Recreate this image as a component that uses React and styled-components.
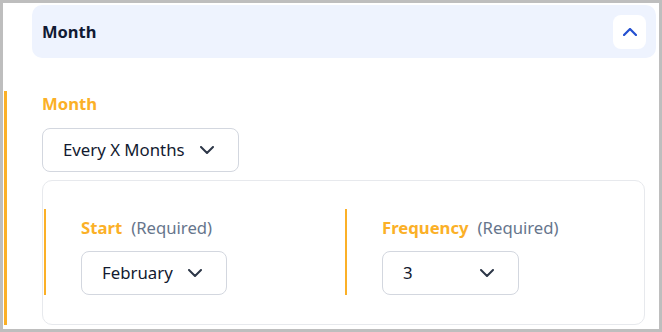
import React from "react";
import styled, { createGlobalStyle } from "styled-components";

const GlobalStyle = createGlobalStyle`
  html, body { margin: 0; padding: 0; background: #fff; }
  body { font-family: "Noto Sans", "Open Sans", sans-serif; }
  * { box-sizing: border-box; }
`;

const ORANGE = "#fbb027";

const Frame = styled.div`
  width: 662px;
  height: 332px;
  border: 3px solid #bebebe;
  background: #fff;
  padding: 2px 3px 0 1px;
  overflow: hidden;
`;

const Header = styled.div`
  margin-left: 28px;
  height: 53px;
  background: #eef3fe;
  border-radius: 10px;
  display: flex;
  align-items: center;
  justify-content: space-between;
  padding: 0 10px;
`;

const HeaderTitle = styled.div`
  font-size: 16.5px;
  font-weight: 700;
  color: #111a33;
  line-height: 22px;
`;

const IconButton = styled.button`
  width: 33px;
  height: 34px;
  border: none;
  border-radius: 8px;
  background: #fff;
  display: flex;
  align-items: center;
  justify-content: center;
  padding: 0;
  margin-top: 1px;
  cursor: pointer;
`;

const Body = styled.div`
  margin-top: 33px;
  border-left: 3px solid ${ORANGE};
  padding: 2px 11px 0 35px;
  display: flex;
  flex-direction: column;
  align-items: flex-start;
`;

const Label = styled.div`
  font-size: 16.7px;
  line-height: 22px;
  font-weight: 700;
  color: ${ORANGE};
  display: flex;
  align-items: baseline;
`;

const Required = styled.span`
  font-weight: 400;
  color: #66758c;
  margin-left: 9px;
`;

const Select = styled.div`
  height: 44px;
  width: ${(p) => (p.$width ? `${p.$width}px` : "auto")};
  border: 1px solid #d3d7df;
  border-radius: 8px;
  background: #fff;
  display: flex;
  align-items: center;
  justify-content: space-between;
  gap: 15px;
  padding: 0 24px 0 20px;
  font-size: 16.8px;
  line-height: 22px;
  color: #121a30;
  margin-top: ${(p) => p.$mt || 0}px;
`;

const Card = styled.div`
  margin-top: 8px;
  align-self: stretch;
  border: 1px solid #e7e9ed;
  border-radius: 10px;
  padding: 28px 1px 29px 1px;
  display: grid;
  grid-template-columns: 301px 1fr;
`;

const Column = styled.div`
  border-left: 2px solid ${ORANGE};
  padding: 8px 0 0 35px;
  display: flex;
  flex-direction: column;
  align-items: flex-start;
`;

const ChevronDown = () => (
  <svg width="14" height="8" viewBox="0 0 14 8" fill="none">
    <path d="M1 1l6 6 6-6" stroke="#2d3748" strokeWidth="2" strokeLinecap="round" strokeLinejoin="round" />
  </svg>
);

const ChevronUp = () => (
  <svg width="14" height="8" viewBox="0 0 14 8" fill="none">
    <path d="M1 7l6-6 6 6" stroke="#2450d0" strokeWidth="2.2" strokeLinecap="square" strokeLinejoin="miter" />
  </svg>
);

export default function App() {
  return (
    <>
      <GlobalStyle />
      <Frame>
        <Header>
          <HeaderTitle>Month</HeaderTitle>
          <IconButton aria-label="Collapse">
            <ChevronUp />
          </IconButton>
        </Header>
        <Body>
          <Label>Month</Label>
          <Select $mt={13}>
            <span>Every X Months</span>
            <ChevronDown />
          </Select>
          <Card>
            <Column>
              <Label>
                Start<Required>(Required)</Required>
              </Label>
              <Select $mt={12}>
                <span>February</span>
                <ChevronDown />
              </Select>
            </Column>
            <Column>
              <Label>
                Frequency<Required>(Required)</Required>
              </Label>
              <Select $mt={12} $width={137}>
                <span>3</span>
                <ChevronDown />
              </Select>
            </Column>
          </Card>
        </Body>
      </Frame>
    </>
  );
}
